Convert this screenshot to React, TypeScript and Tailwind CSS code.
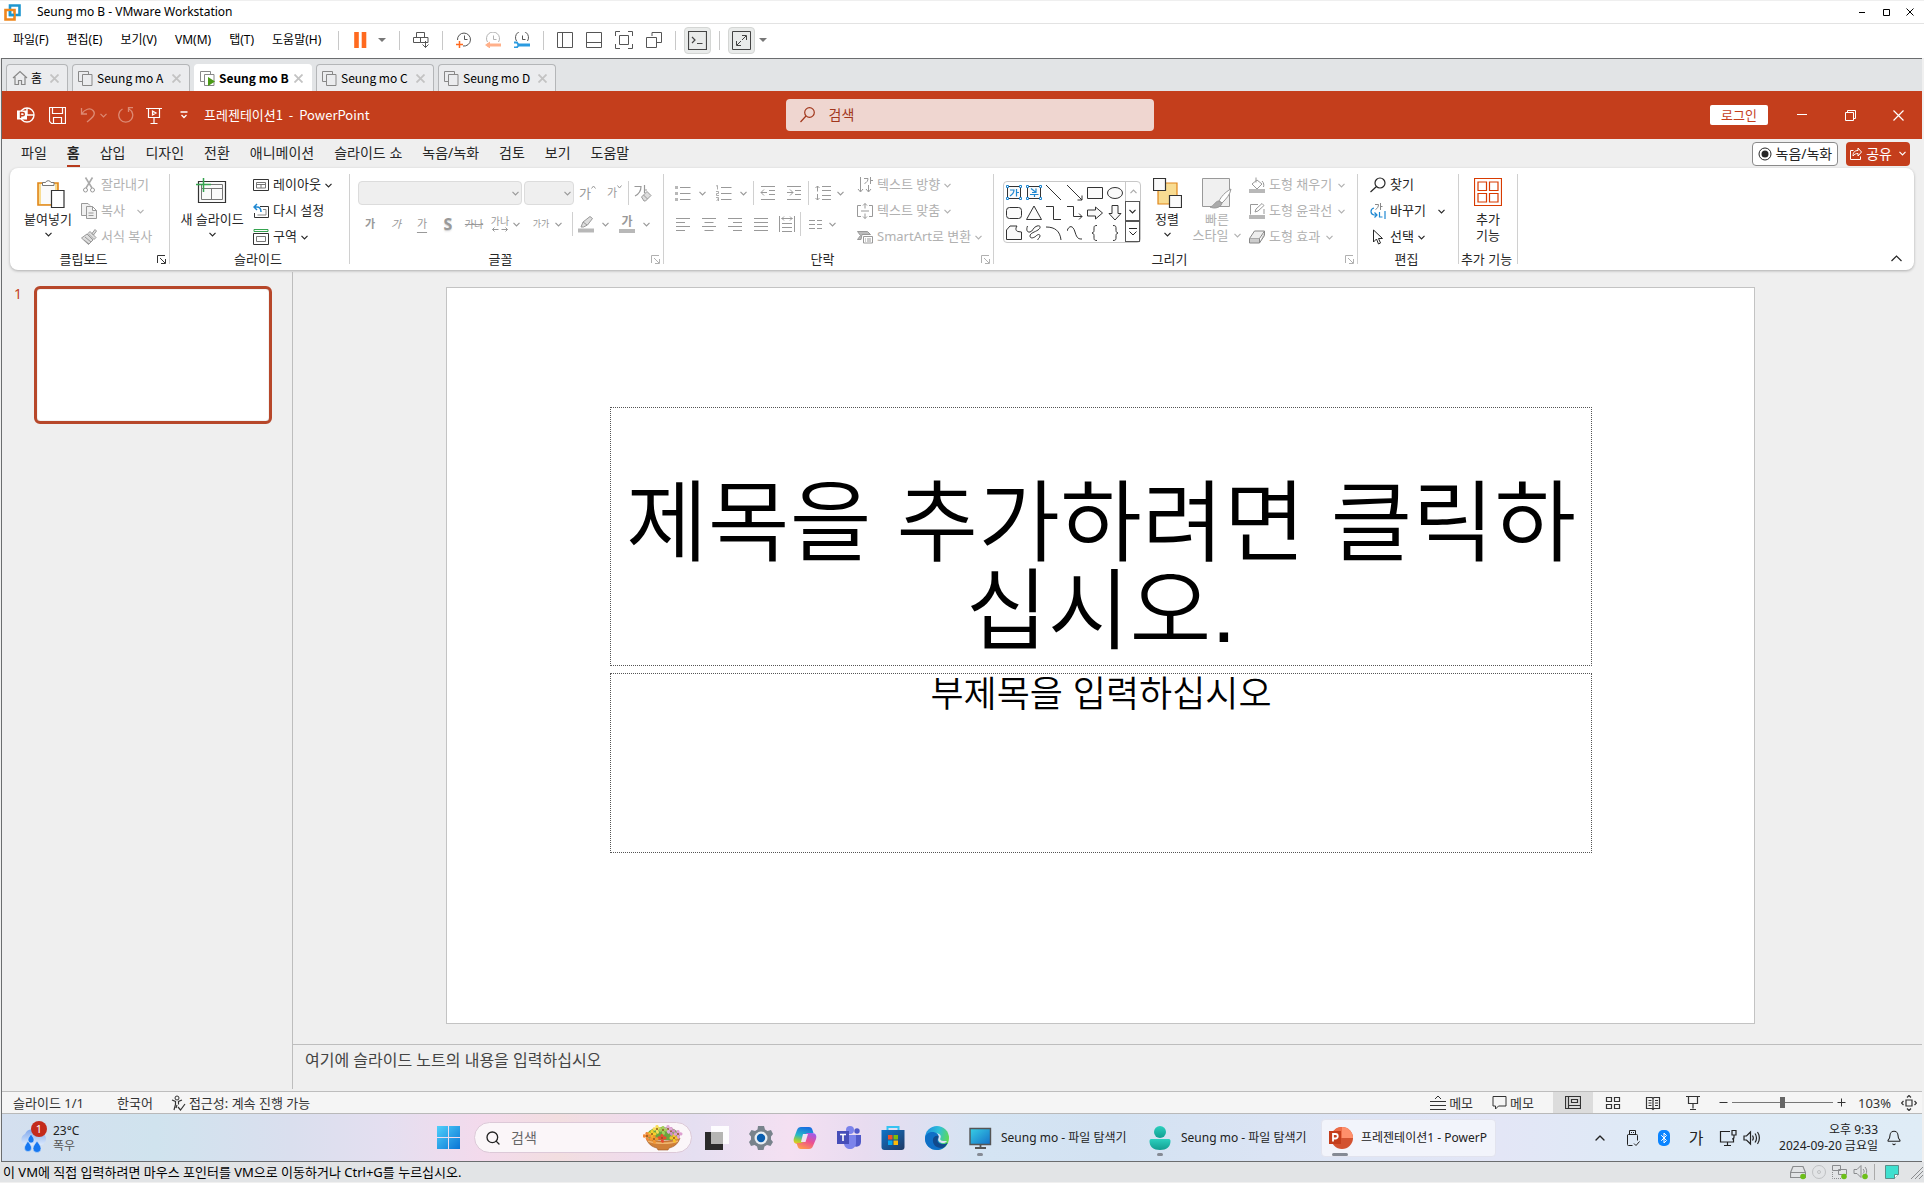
import type { ReactNode } from "react"
import { Bell, Bluetooth, ChevronUp, Search } from "lucide-react"
import clsx from "clsx"

interface SvgProps {
  w?: number
  h?: number
  className?: string
  children: ReactNode
}

// Outline icon on a pixel grid, one user unit per pixel
const Svg = ({ w = 16, h = 16, className, children }: SvgProps) => (
  <svg
    width={w}
    height={h}
    viewBox={`0 0 ${w} ${h}`}
    fill="none"
    stroke="currentColor"
    aria-hidden="true"
    className={clsx("flex-shrink-0", className)}
  >
    {children}
  </svg>
)

const Chevron = ({ className }: { className?: string }) => (
  <Svg w={7} h={5} className={className}>
    <path d="M0.5 0.8 3.5 3.8 6.5 0.8" strokeWidth="1.2" />
  </Svg>
)

const Launcher = ({ muted }: { muted?: boolean }) => (
  <button aria-label="옵션" className={muted ? "text-[#b0b0b0]" : "text-[#333]"}>
    <Svg w={9} h={9}>
      <path d="M0.5 8V0.5H8M3 3l5 5M8.500 4v4.500H4" />
    </Svg>
  </button>
)

/* ---------- VMware frame ---------- */

const TitleBar = () => (
  <header className="flex h-6 items-center border-t border-b border-t-[#efefef] border-b-[#e3e3e3] bg-white pl-1 text-xs">
    <Svg w={17} h={17}>
      <path d="M6 1.500h9.500v9.500H6z" stroke="#1f97cf" strokeWidth="2.600" />
      <path d="M1.500 6H10.500v9.500H1.500z" stroke="#f0861c" strokeWidth="2.600" />
      <path d="M6 7V11H10" stroke="#1f97cf" strokeWidth="2.400" />
    </Svg>
    <h1 className="ml-4 flex-1">Seung mo B - VMware Workstation</h1>
    <div className="flex gap-2 pr-1.5">
      <button aria-label="최소화">
        <Svg>
          <path d="M5 8.500h6" />
        </Svg>
      </button>
      <button aria-label="최대화">
        <Svg>
          <path d="M5.500 5.500h6v6h-6z" />
        </Svg>
      </button>
      <button aria-label="닫기">
        <Svg>
          <path d="M4.500 4.500 11.500 11.500M11.500 4.500 4.500 11.500" />
        </Svg>
      </button>
    </div>
  </header>
)

const menus = ["파일(F)", "편집(E)", "보기(V)", "VM(M)", "탭(T)", "도움말(H)"]

const ToolSep = () => <span className="h-[19px] w-px flex-shrink-0 bg-[#c8c8c8]" />

const ClockHands = () => <path d="M8.500 3.500V7.500H11.500" />

const MenuBar = () => (
  <div className="flex h-[34px] items-center bg-white pb-0.5 pl-[13px] text-xs text-black">
    <nav className="flex gap-[18px] pr-[17px]">
      {menus.map((menu) => (
        <button key={menu}>{menu}</button>
      ))}
    </nav>
    <div className="flex items-center gap-[13px] text-[#555]">
      <ToolSep />
      <button aria-label="일시 중지" className="flex items-center gap-2.5">
        <Svg w={16}>
          <path d="M4.500 0v16M12 0v16" stroke="#ff6a1f" strokeWidth="4.600" />
        </Svg>
        <Svg w={8} h={4}>
          <path d="M0 0h8L4 4z" fill="#777" stroke="none" />
        </Svg>
      </button>
      <ToolSep />
      <button aria-label="Ctrl+Alt+Del">
        <Svg>
          <path d="M3.500 0.500h8v5h-8zM0.500 5.500h7v5h-7zM7.500 5.500h7.500v5H7.500M12.500 9v6.500M9.500 12.500l3 3 3-3" />
        </Svg>
      </button>
      <ToolSep />
      <button aria-label="스냅숏 만들기">
        <Svg>
          <path d="M1.500 8A6.500 6.500 0 1 1 7 14" />
          <ClockHands />
          <path d="M3.500 9v7M0 12.500h7" stroke="#ff6a1f" strokeWidth="1.500" />
        </Svg>
      </button>
      <button aria-label="스냅숏 되돌리기">
        <Svg>
          <g opacity=".45">
            <path d="M2.500 10A6.500 6.500 0 1 1 13.500 10" />
            <ClockHands />
          </g>
          <path d="M2 13h14" stroke="#ffb08a" strokeWidth="3" />
          <path d="M0 13l5-3.500v7z" fill="#ffb08a" stroke="none" />
        </Svg>
      </button>
      <button aria-label="스냅숏 관리">
        <Svg>
          <path d="M2.500 9A6.500 6.500 0 1 1 13.500 9" />
          <ClockHands />
          <path d="M4 13h12" stroke="#2b9be0" strokeWidth="3" />
          <path d="M0 10.500h3l1.500 2.500-1.500 2.500H0" stroke="#2b9be0" strokeWidth="1.800" />
        </Svg>
      </button>
      <ToolSep />
      <button aria-label="라이브러리">
        <Svg>
          <path d="M0.500 0.500h15v15H0.500zM5.500 0.500v15" />
        </Svg>
      </button>
      <button aria-label="썸네일">
        <Svg>
          <path d="M0.500 0.500h15v15H0.500zM0.500 10.500h15" />
        </Svg>
      </button>
      <button aria-label="전체 화면">
        <Svg w={18} h={18}>
          <path d="M0.500 5V0.500H5M13 0.500h4.500V5M17.500 13v4.500H13M5 17.500H0.500V13M4.500 4.500h9v9h-9z" />
        </Svg>
      </button>
      <button aria-label="유니티">
        <Svg>
          <path d="M6 4V0.500h9.500V10.500H11M0.500 5.500h10v10H0.500z" />
        </Svg>
      </button>
      <ToolSep />
    </div>
    <div className="ml-2 flex items-center gap-2 text-[#444]">
      <button aria-label="콘솔" className="flex h-[27px] w-[27px] items-center justify-center rounded border border-[#d4d6d4] bg-[#e9ebea]">
        <Svg w={19} h={19}>
          <path d="M0.500 0.500h18v18H0.500zM4 6l3 3-3 3M9 12.500h5.500" strokeWidth="1.200" />
        </Svg>
      </button>
      <ToolSep />
      <button aria-label="자동 맞춤" className="flex h-[27px] w-[27px] items-center justify-center rounded border border-[#d4d6d4] bg-[#e9ebea]">
        <Svg w={19} h={19}>
          <path d="M0.500 0.500h18v18H0.500zM10 4.500h4.500V9M4.500 10v4.500H9M14 5l-4 4M5 14l4-4" />
        </Svg>
      </button>
      <Svg w={8} h={4} className="-ml-1">
        <path d="M0 0h8L4 4z" fill="#777" stroke="none" />
      </Svg>
    </div>
  </div>
)

const vmTabs = [
  { name: "홈", home: true, active: false },
  { name: "Seung mo A", home: false, active: false },
  { name: "Seung mo B", home: false, active: true },
  { name: "Seung mo C", home: false, active: false },
  { name: "Seung mo D", home: false, active: false },
]

const VmTabs = () => (
  <div className="flex h-[33px] items-end gap-1 border-t border-[#6b6d6f] bg-[#e2e4e6] pl-1 font-['Noto_Sans_CJK_KR',sans-serif] text-xs text-black">
    {vmTabs.map((tab) => (
      <div
        key={tab.name}
        className={clsx(
          "flex h-[27px] items-center rounded-t border border-b-0 pr-2 pl-[5px]",
          tab.home ? "w-[62px]" : "w-[118px]",
          tab.active ? "border-white bg-white font-bold" : "border-[#b4b6b8] bg-[#ebecee]",
        )}
      >
        <Svg className="text-[#888]">
          {tab.home ? (
            <path d="M1 8 8 1.500 15 8M3 7v7.500h3.500v-4h3v4H13V7" strokeWidth="1.200" />
          ) : (
            <path d="M4 11.500H0.500v-10h10V4M4.500 4.500h9.500v11H4.500z" />
          )}
          {tab.active && <path d="M8 7l7 4.500L8 16z" fill="#4a9a16" stroke="none" />}
        </Svg>
        <button className="ml-[3px] flex-1 text-left leading-4 whitespace-nowrap">{tab.name}</button>
        <button aria-label="탭 닫기" className="text-[#c3c3c3]">
          <Svg w={9} h={9}>
            <path d="M0.500 0.500l8 8M8.500 0.500l-8 8" strokeWidth="1.800" />
          </Svg>
        </button>
      </div>
    ))}
  </div>
)

/* ---------- PowerPoint ---------- */

const AppTitle = () => (
  <div className="flex h-12 items-center bg-[#c43e1c] text-white">
    <div className="flex flex-1 items-center pl-[15px]">
      <Svg w={18} h={18}>
        <circle cx="10" cy="9" r="7" strokeWidth="1.400" />
        <path d="M10 2v7h7" strokeWidth="1.400" />
        <path d="M0 4.500h10v9H0z" fill="#fff" stroke="none" />
        <path d="M3.500 12V6.500h2.200a1.600 1.600 0 0 1 0 3.300H3.500" stroke="#c43e1c" strokeWidth="1.400" />
      </Svg>
      <button aria-label="저장" className="ml-3.5">
        <Svg w={17} h={17}>
          <path d="M0.500 0.500h16v16H2.500l-2-2zM3.500 0.500v6h10v-6M4.500 16.500v-6h8v6" strokeWidth="1.200" />
        </Svg>
      </button>
      <button aria-label="실행 취소" className="ml-3.5 flex items-center gap-1 text-[#dd8a74]">
        <Svg>
          <path d="M1.500 1v6H7M1.500 7C5 2 10 0.500 13 3.500s1 6-6 11.500" strokeWidth="1.300" />
        </Svg>
        <Chevron />
      </button>
      <button aria-label="다시 실행" className="ml-2.5 text-[#dd8a74]">
        <Svg w={17}>
          <path d="M5.500 2A7 7 0 1 0 12 2M16 0.500h-4.500V5" strokeWidth="1.300" />
        </Svg>
      </button>
      <button aria-label="처음부터 시작" className="ml-3">
        <Svg w={16} h={17}>
          <path d="M0 1.500h16M2.500 1.500v9h11v-9M8 10.500v6M4.500 16.500h7M6.500 4v4l3.500-2z" strokeWidth="1.200" />
        </Svg>
      </button>
      <button aria-label="빠른 실행 도구 모음" className="ml-[18px]">
        <Svg w={8} h={8}>
          <path d="M0.500 1h7M1.500 4l2.500 2.500L6.500 4" strokeWidth="1.300" />
        </Svg>
      </button>
      <span className="ml-4 font-['Noto_Sans_CJK_KR',sans-serif] text-[13px] leading-4 whitespace-pre">프레젠테이션1&nbsp; - &nbsp;PowerPoint</span>
    </div>
    <label className="flex h-8 w-[368px] items-center gap-3.5 rounded bg-[#efd6d0] pl-3.5 text-[#a1371c]">
      <Svg w={15}>
        <circle cx="9.500" cy="5.500" r="4.800" strokeWidth="1.200" />
        <path d="M6 9 0.500 15" strokeWidth="1.200" />
      </Svg>
      <input aria-label="검색" placeholder="검색" className="w-full bg-transparent text-sm outline-none placeholder:text-[#a1371c]" />
    </label>
    <div className="flex flex-1 items-center justify-end">
      <button className="h-5 rounded-xs bg-white px-[11px] text-[13px] leading-5 text-[#c43e1c]">로그인</button>
      <button aria-label="최소화" className="ml-2.5 flex w-12 justify-center">
        <Svg w={10} h={10}>
          <path d="M0 4.500h10" />
        </Svg>
      </button>
      <button aria-label="이전 크기로" className="flex w-12 justify-center">
        <Svg w={11} h={11}>
          <path d="M0.500 2.500h8v8h-8zM2.500 2V0.500h8v8H9" />
        </Svg>
      </button>
      <button aria-label="닫기" className="flex w-12 justify-center">
        <Svg w={11} h={11}>
          <path d="M0.500 0.500l10 10M10.500 0.500l-10 10" strokeWidth="1.200" />
        </Svg>
      </button>
    </div>
  </div>
)

const ribbonTabs = ["파일", "홈", "삽입", "디자인", "전환", "애니메이션", "슬라이드 쇼", "녹음/녹화", "검토", "보기", "도움말"]

const RibbonTabs = () => (
  <div className="flex h-[29px] items-center pr-3 pl-[19px] text-sm text-[#262626]">
    <nav className="flex flex-1 gap-5">
      {ribbonTabs.map((tab) => (
        <button
          key={tab}
          className={clsx(
            "h-[26px] border-b-2 leading-6",
            tab === "홈" ? "border-[#b83b1d] font-bold" : "border-transparent",
          )}
        >
          {tab}
        </button>
      ))}
    </nav>
    <button className="flex h-6 items-center gap-1 rounded border border-[#8a8a8a] bg-white px-[5px]">
      <Svg w={14} h={14}>
        <circle cx="7" cy="7" r="6" />
        <circle cx="7" cy="7" r="3.500" fill="currentColor" stroke="none" />
      </Svg>
      녹음/녹화
    </button>
    <button className="ml-2 flex h-6 items-center gap-1 rounded bg-[#c43e1c] px-1 text-white">
      <Svg w={12} h={13}>
        <path d="M3.500 3.500h-3v9h10v-3M3 9c0-4 2-5.500 5-5.500V1l3.500 4L8 9V6.500C6 6.500 4.500 7 3 9z" />
      </Svg>
      공유
      <Chevron className="ml-[3px]" />
    </button>
  </div>
)

const Group = ({ label, launcher, className, children }: { label: string; launcher?: ReactNode; className?: string; children: ReactNode }) => (
  <>
    <section className={clsx("flex flex-col pt-1", className)}>
      <div className="flex h-[78px]">{children}</div>
      <div className="flex h-[18px] items-center pr-[3px]">
        <h2 className="flex-1 text-center leading-4">{label}</h2>
        {launcher}
      </div>
    </section>
    <div className="my-1.5 w-px flex-shrink-0 bg-[#d0d0d0]" />
  </>
)

interface SmallProps {
  icon: ReactNode
  label: string
  muted?: boolean
  caret?: string
}

const Small = ({ icon, label, muted, caret }: SmallProps) => (
  <button className={clsx("flex h-[26px] items-center whitespace-nowrap", muted ? "text-[#b1b1b1]" : "text-[#262626]")}>
    {icon}
    <span className="ml-1">{label}</span>
    {caret && <Chevron className={caret} />}
  </button>
)

const Big = ({ icon, children, className }: { icon: ReactNode; children: ReactNode; className: string }) => (
  <button className={clsx("flex flex-col items-center pt-1.5 leading-4", className)}>
    <span className="mb-[3px] flex h-[30px] items-start">{icon}</span>
    {children}
  </button>
)

const Clipboard = () => (
  <Group label="클립보드" launcher={<Launcher />} className="w-[159px]">
    <Big
      className="ml-2.5 w-[56px]"
      icon={
        <Svg w={34} h={30}>
          <path d="M7 5h20v22H7z" fill="#f8dc92" stroke="#e0861a" strokeWidth="1.600" />
          <path d="M10 6h14v20H10z" fill="#fafafa" stroke="none" />
          <path d="M11.500 7.500v-3h3a3 3 0 0 1 5.500 0h3v3z" fill="#fff" stroke="#777" />
          <path d="M20.500 12.500h12.500v17H20.500z" fill="#fff" stroke="#333" strokeWidth="1.200" />
        </Svg>
      }
    >
      <span>붙여넣기</span>
      <Chevron className="mt-[5px]" />
    </Big>
    <div className="ml-[5px]">
      <Small
        muted
        label="잘라내기"
        icon={
          <Svg>
            <path d="M4.500 0.500 11 11M11.500 0.500 5 11" stroke="#aaa" strokeWidth="1.600" />
            <circle cx="4.500" cy="13" r="2" stroke="#999" />
            <circle cx="11.500" cy="13" r="2" stroke="#999" />
          </Svg>
        }
      />
      <Small
        muted
        label="복사"
        caret="ml-3"
        icon={
          <Svg>
            <path d="M5.500 12.500H0.500v-12H7l2 2M5.500 3.500h6l4 4v8h-10zM11.500 3.500v4h4M7.500 10h5M7.500 12.500h5" stroke="#999" fill="#f0f0f0" />
          </Svg>
        }
      />
      <Small
        muted
        label="서식 복사"
        icon={
          <Svg>
            <path d="M0.500 9 6 5l6 6-4.500 4.500zM7 4.500l2-2 6 6-2 2zM11 4.500l3-4 1.500 1.500-3 4z" stroke="#999" fill="#ddd" />
            <path d="M3 11l5 4M4 8l6 5" stroke="#999" />
          </Svg>
        }
      />
    </div>
  </Group>
)

const Slides = () => (
  <Group label="슬라이드" className="w-[179px]">
    <Big
      className="ml-1.5 w-[72px]"
      icon={
        <Svg w={32} h={28}>
          <path d="M2.500 3.500h27v21h-27z" fill="#fafafa" stroke="#333" strokeWidth="1.200" />
          <path d="M5.500 6.500h21v15h-21zM5.500 10.500h21M15.500 10.500v11" stroke="#777" />
          <path d="M7.500 0v14M0 6.500h15" stroke="#35a34f" strokeWidth="1.500" />
        </Svg>
      }
    >
      <span className="whitespace-nowrap">새 슬라이드</span>
      <Chevron className="mt-[5px]" />
    </Big>
    <div className="ml-[5px]">
      <Small
        label="레이아웃"
        caret="ml-1"
        icon={
          <Svg>
            <path d="M0.500 2.500h15v11H0.500z" stroke="#333" />
            <path d="M3.500 5.500h9v5.500h-9zM3.500 7.500h9M8 7.500V11" stroke="#777" />
          </Svg>
        }
      />
      <Small
        label="다시 설정"
        icon={
          <Svg>
            <path d="M7 3.500h8.500v11H1.500V10" stroke="#333" />
            <path d="M10 6.500h3v5.500H4.500" stroke="#888" />
            <path d="M4 1 1 4l3 3M1 4h3c3 0 4 1.500 4 5" stroke="#1e88d2" strokeWidth="1.500" />
          </Svg>
        }
      />
      <Small
        label="구역"
        caret="ml-1"
        icon={
          <Svg>
            <path d="M1 0.500h14v2H1z" stroke="#35a34f" />
            <path d="M0.500 4.500h15v11H0.500z" stroke="#333" />
            <path d="M3.500 7.500h9v5h-9z" stroke="#777" />
          </Svg>
        }
      />
    </div>
  </Group>
)

const RowSep = ({ className }: { className?: string }) => <span className={clsx("h-6 w-px bg-[#d0d0d0]", className)} />

const Fonts = () => (
  <Group label="글꼴" launcher={<Launcher muted />} className="w-[313px]">
    <div className="flex flex-col gap-[7px] pt-[9px] text-[#999]">
      <div className="flex h-6 items-center pl-2">
        <div className="relative h-6 w-[164px]">
          <select aria-label="글꼴" className="h-6 w-full appearance-none rounded border border-[#dcdcdc] bg-[#efefef]" />
          <Chevron className="pointer-events-none absolute top-2.5 right-[3px]" />
        </div>
        <div className="relative ml-0.5 h-6 w-[50px]">
          <select aria-label="글꼴 크기" className="h-6 w-full appearance-none rounded border border-[#dcdcdc] bg-[#efefef]" />
          <Chevron className="pointer-events-none absolute top-2.5 right-[3px]" />
        </div>
        <button aria-label="글꼴 크기 크게" className="ml-[5px] flex w-[18px] items-start text-[13px] leading-4">
          가
          <Svg w={5} h={4}>
            <path d="M0.500 3.500l2-2.500 2 2.500" />
          </Svg>
        </button>
        <button aria-label="글꼴 크기 작게" className="ml-2.5 flex w-4 items-start text-[11px] leading-4">
          가
          <Svg w={5} h={4}>
            <path d="M0.500 0.500l2 2.500 2-2.500" />
          </Svg>
        </button>
        <RowSep className="ml-[5px]" />
        <button aria-label="모든 서식 지우기" className="ml-[5px]">
          <Svg w={18} h={17}>
            <path d="M0.500 1.500h6.500c0 4-2 7.500-6 9.500M10.500 0v8M10.500 5h2.500" strokeWidth="1.200" />
            <path d="M7.500 12l5.500-5.500 4 4-5.500 5.500h-1.500z" fill="#ddd" />
            <path d="M9.500 10l4 4" />
          </Svg>
        </button>
      </div>
      <div className="flex h-6 items-center pl-[7px] text-[11px]">
        <button className="w-[26px] font-bold">가</button>
        <button className="w-[26px] italic">가</button>
        <button className="w-[26px] underline underline-offset-4">가</button>
        <button className="w-[26px] text-base font-bold text-shadow-sm">S</button>
        <button className="w-[26px] text-[10px] line-through">가나</button>
        <button className="flex w-[26px] flex-col items-center text-[10px] leading-[11px]">
          가나
          <Svg h={5}>
            <path d="M2.500 0.500l-2 2 2 2M0.500 2.500h6M13.500 0.500l2 2-2 2M15.500 2.500h-6" />
          </Svg>
        </button>
        <Chevron />
        <button className="ml-2.5 w-[22px] text-[9px]">가가</button>
        <Chevron className="ml-[3px]" />
        <RowSep className="ml-2.5" />
        <button aria-label="강조색" className="ml-[5px] flex items-center gap-2">
          <Svg h={17}>
            <path d="M3 11l2-5 7-5.500 2.500 2L9.500 9l-4 2zM5 6l4 3" fill="#ddd" />
            <path d="M0 14.500h16" stroke="#b8b8b8" strokeWidth="4" />
          </Svg>
          <Chevron />
        </button>
        <button aria-label="글꼴 색" className="ml-2.5 flex items-center gap-2 font-bold">
          <span className="w-4 border-b-4 border-[#b8b8b8] pb-px text-xs leading-3">가</span>
          <Chevron />
        </button>
      </div>
    </div>
  </Group>
)

const alignments = [
  { name: "왼쪽 맞춤", path: "M1 2.500h14M1 6.500h9M1 10.500h14M1 14.500h9" },
  { name: "가운데 맞춤", path: "M1 2.500h14M3.500 6.500h9M1 10.500h14M3.500 14.500h9" },
  { name: "오른쪽 맞춤", path: "M1 2.500h14M6 6.500h9M1 10.500h14M6 14.500h9" },
  { name: "양쪽 맞춤", path: "M1 2.500h14M1 6.500h14M1 10.500h14M1 14.500h14" },
  { name: "균등 분할", path: "M0.500 0v16M15.500 0v16M2.500 2.500h11M5 0.500l-2 2 2 2M11 0.500l2 2-2 2M3 7.500h10M3 11.500h10M3 15.500h10" },
]

const Paragraph = () => (
  <Group label="단락" launcher={<Launcher muted />} className="w-[329px]">
    <div className="flex w-[193px] flex-col gap-[7px] pt-[9px] text-[#999]">
      <div className="flex h-6 items-center pl-[11px]">
        <button aria-label="글머리 기호" className="flex items-center gap-2">
          <Svg>
            <path d="M5 2.500h10.500M5 8.500h10.500M5 14.500h10.500" />
            <path d="M0 2.500h3M0 8.500h3M0 14.500h3" strokeWidth="3" stroke="#b8b8b8" />
          </Svg>
          <Chevron />
        </button>
        <button aria-label="번호 매기기" className="ml-2.5 flex items-center gap-2">
          <Svg>
            <path d="M5 2.500h10.500M5 8.500h10.500M5 14.500h10.500" />
            <path d="M0 1l1.500-.5v4M0 6.500h2.500v2H0.500v2h2.500M0 12.500h2.500v3.500H0M1 14.200h1.500" strokeWidth=".8" />
          </Svg>
          <Chevron />
        </button>
        <RowSep className="ml-1.5" />
        <button aria-label="목록 수준 줄임" className="ml-1.5">
          <Svg>
            <path d="M1 1.500h14M9 5.500h6M9 9.500h6M1 14.500h14M1 7.500h6M4 4.500l-3 3 3 3" />
          </Svg>
        </button>
        <button aria-label="목록 수준 늘림" className="ml-2.5">
          <Svg>
            <path d="M1 1.500h14M9 5.500h6M9 9.500h6M1 14.500h14M1 7.500h6M4 4.500l3 3-3 3" />
          </Svg>
        </button>
        <RowSep className="ml-1.5" />
        <button aria-label="줄 간격" className="ml-1.5 flex items-center gap-1.5">
          <Svg>
            <path d="M7 1.500h9M7 5.500h9M7 10.500h9M7 14.500h9M2.500 1v5.500M0.500 3l2-2 2 2M2.500 9v6M0.500 13l2 2 2-2" />
          </Svg>
          <Chevron />
        </button>
      </div>
      <div className="flex h-6 items-center pl-1.5">
        {alignments.map((item) => (
          <button key={item.name} aria-label={item.name} className="flex w-[26px] justify-center">
            <Svg>
              <path d={item.path} />
            </Svg>
          </button>
        ))}
        <RowSep />
        <button aria-label="열" className="ml-2 flex items-center gap-1.5">
          <Svg w={14}>
            <path d="M0 4.500h6M0 8.500h6M0 12.500h6M8 4.500h5M8 8.500h5M8 12.500h5" />
          </Svg>
          <Chevron />
        </button>
      </div>
    </div>
    <div>
      <Small
        muted
        label="텍스트 방향"
        caret="ml-1"
        icon={
          <Svg className="text-[#999]">
            <path d="M3.500 0v14.500M1 12l2.500 3L6 12M11.500 8v6.500M9 12l2.500 3 2.500-3M7 1.500h4c0 2-1 4-3.500 5M13.500 0v7M13.500 3.500H16" />
          </Svg>
        }
      />
      <Small
        muted
        label="텍스트 맞춤"
        caret="ml-1"
        icon={
          <Svg className="text-[#999]">
            <path d="M4 2.500H0.500v11H4M12 2.500h3.500v11H12M4 8h8M8 0.500v5M6 2.500l2-2 2 2M8 15.500v-5M6 13.500l2 2 2-2" />
          </Svg>
        }
      />
      <Small
        muted
        label="SmartArt로 변환"
        caret="ml-1"
        icon={
          <Svg className="text-[#999]">
            <path d="M0.500 2.500h10l3 3H5l-1 5H0.500l3-4z" fill="#bbb" />
            <path d="M6.500 7.500h9v6.500h-9z" fill="#fff" />
            <path d="M8 10h1M10 10h4M8 12h1M10 12h4" />
          </Svg>
        }
      />
    </div>
  </Group>
)

const handles = (
  <path d="M0.500 1.500h2v2h-2zM13.500 1.500h2v2h-2zM0.500 13.500h2v2h-2zM13.500 13.500h2v2h-2z" fill="#fff" stroke="#1e88d2" />
)

const shapes: { name: string; art: ReactNode }[] = [
  {
    name: "텍스트 상자",
    art: (
      <>
        <path d="M1.500 2.500h13v12h-13z" fill="#fafafa" />
        <path d="M4 6h4c0 2-1 4-4 6M10.500 5v7.500M10.500 8.500h2.500" stroke="#1e88d2" strokeWidth="1.200" />
        {handles}
      </>
    ),
  },
  {
    name: "세로 텍스트 상자",
    art: (
      <>
        <path d="M1.500 2.500h13v12h-13z" fill="#fafafa" />
        <path d="M5 4.500l4.500 3.500M10 4.500v4H6M4 10.500h8.500M8.500 10.500v2.500" stroke="#1e88d2" strokeWidth="1.200" />
        {handles}
      </>
    ),
  },
  { name: "선", art: <path d="M0 1l15 15" /> },
  { name: "선 화살표", art: <path d="M0 1l15 15M15 11.500V16h-4.500" /> },
  { name: "직사각형", art: <path d="M0.500 3.500h15v11H0.500z" fill="#fafafa" /> },
  { name: "타원", art: <ellipse cx="8" cy="9" rx="7.500" ry="5.500" fill="#fafafa" /> },
  { name: "둥근 사각형", art: <rect x="0.500" y="3.500" width="15" height="11" rx="3" fill="#fafafa" /> },
  { name: "삼각형", art: <path d="M8 2l7.500 13.500H0.500z" fill="#fafafa" /> },
  { name: "꺾인 연결선", art: <path d="M0 2.500h7.500v13H15" /> },
  { name: "꺾인 화살표", art: <path d="M0 2.500h6.500v10H15M12 9.500l3 3-3 3" /> },
  { name: "오른쪽 화살표", art: <path d="M0.500 6h8V3l7 6-7 6v-3h-8z" fill="#fafafa" /> },
  { name: "아래쪽 화살표", art: <path d="M5 1.500h6v8h3l-6 6.500-6-6.500h3z" fill="#fafafa" /> },
  { name: "자유형", art: <path d="M0.500 15.500V6l3.500-4h7c-2 3-1 5 1 5.500l3.500.5v7.500z" fill="#fafafa" /> },
  { name: "자유 곡선", art: <path d="M1.500 2C0 6 1 8.500 4 8s3-5 7-6 4 2 1 4-8 3-8 6 4 2 6 0 4-2 4 0-3 3-2 4" /> },
  { name: "호", art: <path d="M0 3c9 0 14 4 15 13" /> },
  { name: "곡선", art: <path d="M0 7c2-6 6-6 8 1s4 7 7 7" /> },
  { name: "왼쪽 중괄호", art: <path d="M10 1.500c-3 0-3 1-3 3.500s0 3.500-2 4c2 .5 2 1.500 2 4s0 3.500 3 3.500" /> },
  { name: "오른쪽 중괄호", art: <path d="M6 1.500c3 0 3 1 3 3.500s0 3.500 2 4c-2 .5-2 1.500-2 4s0 3.500-3 3.500" /> },
]

const Drawing = () => (
  <Group label="그리기" launcher={<Launcher muted />} className="w-[363px]">
    <div className="mt-[9px] ml-[9px] flex h-[62px] w-[138px] rounded border border-[#c8c8c8]">
      <div className="grid flex-1 grid-cols-6 text-[#333]">
        {shapes.map((shape) => (
          <button key={shape.name} aria-label={shape.name} className="flex h-5 items-center justify-center">
            <Svg h={17}>{shape.art}</Svg>
          </button>
        ))}
      </div>
      <div className="flex w-[15px] flex-col">
        <button aria-label="위로" className="flex flex-1 items-center justify-center border-l border-[#c8c8c8] text-[#aaa]">
          <Chevron className="rotate-180" />
        </button>
        <button aria-label="아래로" className="flex flex-1 items-center justify-center border border-[#555]">
          <Chevron />
        </button>
        <button aria-label="자세히" className="flex flex-1 items-center justify-center border border-[#555]">
          <Svg w={8} h={8}>
            <path d="M0 0.500h8M0.500 3.500 4 7l3.500-3.500" />
          </Svg>
        </button>
      </div>
    </div>
    <Big
      className="ml-1 w-11"
      icon={
        <Svg w={29} h={30}>
          <path d="M5 5h19v21H5z" fill="#f8dc92" stroke="#e0861a" strokeWidth="1.200" />
          <path d="M0.500 0.500h12v12h-12zM16.500 17.500h12v12h-12z" fill="#fafafa" stroke="#333" strokeWidth="1.200" />
        </Svg>
      }
    >
      <span>정렬</span>
      <Chevron className="mt-[5px]" />
    </Big>
    <div className="ml-0.5 flex text-[#b1b1b1]">
      <Big
        className="w-[52px]"
        icon={
          <Svg w={30} h={31}>
            <path d="M0.500 0.500h27v28h-27z" fill="#f0f0f0" stroke="#999" />
            <path d="M29 11c-6 3-10 8-12 12l3 2c4-4 8-8 9-14z" fill="#fff" stroke="#999" />
            <path d="M17 23c-4 0-5 5-9 6 4 2 11 1 12-4z" fill="#aaa" stroke="#999" />
          </Svg>
        }
      >
        <span>빠른</span>
        <span className="flex items-center whitespace-nowrap">
          스타일
          <Chevron className="ml-1.5" />
        </span>
      </Big>
    </div>
    <div className="ml-1.5">
      <Small
        muted
        label="도형 채우기"
        caret="ml-1.5"
        icon={
          <Svg>
            <path d="M3 7l5-4 5 4-5 5zM7 0.500v5M13 4c2 2 2 4 1.500 6" stroke="#999" />
            <path d="M0 14h16" stroke="#b8b8b8" strokeWidth="4" />
          </Svg>
        }
      />
      <Small
        muted
        label="도형 윤곽선"
        caret="ml-1.5"
        icon={
          <Svg>
            <path d="M9 1.500H1.500v10M6 9l1-3 6-5.500 2 2L9 8zM15 6v5" stroke="#999" />
            <path d="M0 14h16" stroke="#b8b8b8" strokeWidth="4" />
          </Svg>
        }
      />
      <Small
        muted
        label="도형 효과"
        caret="ml-1.5"
        icon={
          <Svg>
            <path d="M0.500 9.500l5-7.500h10l-5 7.500z" stroke="#888" fill="#eee" />
            <path d="M0.500 9.500v4.500h10V9.500M10.500 14l5-7.500V2" stroke="#888" fill="#ccc" />
          </Svg>
        }
      />
    </div>
  </Group>
)

const Editing = () => (
  <Group label="편집" className="w-[100px]">
    <div className="ml-3">
      <Small
        label="찾기"
        icon={
          <Svg>
            <circle cx="10" cy="6" r="5" strokeWidth="1.200" />
            <path d="M6.500 9.500 0.500 15" strokeWidth="1.200" />
          </Svg>
        }
      />
      <Small
        label="바꾸기"
        caret="ml-3"
        icon={
          <Svg>
            <path d="M5 1.500h3.500c0 2-1 4-3 5M10.500 0v7M10.500 3.500h2" stroke="#888" />
            <path d="M4 5C0 6 0 11 4 12h3M4.500 9.500 7 12l-2.500 2.500M9.500 9v5h3M15 8v8" stroke="#1e88d2" strokeWidth="1.200" />
          </Svg>
        }
      />
      <Small
        label="선택"
        caret="ml-1"
        icon={
          <Svg>
            <path d="M3.500 1v12l3-3 2 5 2-1-2-4.500h4z" />
          </Svg>
        }
      />
    </div>
  </Group>
)

const AddIns = () => (
  <Group label="추가 기능" className="w-[58px] whitespace-nowrap">
    <Big
      className="w-full"
      icon={
        <Svg w={28} h={28}>
          <path d="M0.500 0.500h27v27h-27zM4 4h8.500v8.500H4zM15.500 4H24v8.500h-8.500zM4 15.500h8.500V24H4zM15.500 15.500H24V24h-8.500z" stroke="#d83b01" strokeWidth="1.200" />
        </Svg>
      }
    >
      <span>추가</span>
      <span>기능</span>
    </Big>
  </Group>
)

const Ribbon = () => (
  <div className="mx-2 flex h-[102px] rounded-lg bg-white text-[13px] text-[#262626] shadow-[0_1px_3px_rgba(0,0,0,0.28)]">
    <Clipboard />
    <Slides />
    <Fonts />
    <Paragraph />
    <Drawing />
    <Editing />
    <AddIns />
    <div className="flex flex-1 items-end justify-end pr-3 pb-2">
      <button aria-label="리본 축소">
        <Svg w={11} h={7}>
          <path d="M0.500 6l5-5 5 5" strokeWidth="1.200" />
        </Svg>
      </button>
    </div>
  </div>
)

const Editor = () => (
  <div className="flex flex-1 pt-0.5">
    <aside className="mb-0.5 flex w-[291px] items-start border-r border-[#bdbdbd] pt-3.5 pl-3">
      <span className="w-5 text-sm leading-4 text-[#c43e1c]">1</span>
      <button aria-label="슬라이드 1" className="h-[138px] w-[238px] rounded-md border-[3px] border-[#b7472a] bg-white shadow-[inset_0_0_1px_#888]" />
    </aside>
    <main className="flex flex-1 flex-col">
      <div className="flex flex-1 pt-[15px] pr-[167px] pb-5 pl-[153px]">
        <article className="flex-1 border border-[#c3c3c3] bg-white pt-[119px] pr-[162px] pl-[163px] text-center font-['Liberation_Sans','Noto_Sans_CJK_KR',sans-serif] text-black">
          <div className="flex h-[259px] items-end justify-center border border-dotted border-[#555] px-2.5 pb-2.5">
            <h2 className="text-[89px] leading-[88px] font-[350]">제목을 추가하려면 클릭하십시오.</h2>
          </div>
          <div className="mt-[7px] h-[180px] border border-dotted border-[#555]">
            <p className="text-4xl leading-[42px] font-[350]">부제목을 입력하십시오</p>
          </div>
        </article>
      </div>
      <p className="h-[47px] border-t border-[#bdbdbd] pt-[3px] pl-3 text-base leading-6 text-[#444]">
        여기에 슬라이드 노트의 내용을 입력하십시오
      </p>
    </main>
  </div>
)

const views = [
  { name: "기본", path: "M0.500 1.500h15v12H0.500zM3.500 1.500v12M3.500 10.500h12M6.500 4.500h6v3h-6z" },
  { name: "여러 슬라이드", path: "M1.500 2.500h5v4h-5zM9.500 2.500h5v4h-5zM1.500 9.500h5v4h-5zM9.500 9.500h5v4h-5z" },
  { name: "읽기용 보기", path: "M1.500 2.500h5.500l1 1 1-1h5.500v11H9l-1 1-1-1H1.500zM8 3.500v11M3.500 5.500h3M3.500 8h3M3.500 10.500h3M10 5.500h3M10 8h3M10 10.500h3" },
  { name: "슬라이드 쇼", path: "M1 1.500h14M3.500 1.500v7h9v-7M8 8.500v5M5 14.500h6" },
]

const StatusBar = () => (
  <footer className="flex h-[23px] items-center border-t border-b border-t-[#bdbdbd] border-b-[#b9b9b9] bg-[#f5f5f5] pl-[11px] text-[13px] leading-[18px] text-[#333]">
    <span className="w-[104px]">슬라이드 1/1</span>
    <button>한국어</button>
    <button className="ml-[18px] flex items-center gap-[3px]">
      <Svg w={15}>
        <circle cx="6" cy="3" r="2" />
        <path d="M1 5l3.500 1.500v3L3 15M11 5 7.500 6.500v3M6 10l-1 3M7 12l2.500 3L14 9" strokeWidth="1.200" />
      </Svg>
      접근성: 계속 진행 가능
    </button>
    <div className="flex flex-1 items-center justify-end">
      <button className="flex items-center gap-[3px]">
        <Svg>
          <path d="M0 6.500h16M0 10.500h16M0 14.500h16M5 4l3-3 3 3" />
        </Svg>
        메모
      </button>
      <button className="mr-[19px] ml-[19px] flex items-center gap-[3px]">
        <Svg w={15}>
          <path d="M1 1.500h13v9.500H6.500L3.500 14v-3H1z" />
        </Svg>
        메모
      </button>
      {views.map((view) => (
        <button
          key={view.name}
          aria-label={view.name}
          className={clsx("flex h-[21px] w-10 items-center justify-center", view.name === "기본" && "bg-[#dcdcdc]")}
        >
          <Svg>
            <path d={view.path} strokeWidth="1.200" />
          </Svg>
        </button>
      ))}
      <button aria-label="축소" className="ml-1.5">
        <Svg w={9} h={9}>
          <path d="M0.500 4.500h8" />
        </Svg>
      </button>
      <input
        type="range"
        aria-label="확대/축소"
        defaultValue={50}
        className="mx-1 h-px w-[101px] appearance-none bg-[#777] [&::-webkit-slider-thumb]:h-[11px] [&::-webkit-slider-thumb]:w-[5px] [&::-webkit-slider-thumb]:appearance-none [&::-webkit-slider-thumb]:bg-[#666]"
      />
      <button aria-label="확대">
        <Svg w={9} h={9}>
          <path d="M0.500 4.500h8M4.500 0.500v8" />
        </Svg>
      </button>
      <button className="ml-3 w-8 text-right">103%</button>
      <button aria-label="창에 맞춤" className="mr-[5px] ml-[11px]">
        <Svg>
          <path d="M5 5h6v6H5zM6 2.500l2-2 2 2M6 13.500l2 2 2-2M2.500 6l-2 2 2 2M13.500 6l2 2-2 2" strokeWidth="1.200" />
        </Svg>
      </button>
    </div>
  </footer>
)

/* ---------- Windows taskbar ---------- */

const Weather = () => (
  <button className="flex items-center gap-[5px] text-left text-xs leading-[15px] text-[#222]">
    <Svg w={29} h={34}>
      <defs>
        <linearGradient id="cloud" x1="0" y1="0" x2="0" y2="1">
          <stop offset="0" stopColor="#7fa8ee" />
          <stop offset="1" stopColor="#dce9fb" />
        </linearGradient>
      </defs>
      <path d="M6 24a6 6 0 0 1 0-11 8 8 0 0 1 14-1 6 6 0 0 1 2 12z" fill="url(#cloud)" stroke="none" />
      <path d="M12 13c2 3 3 4 3 6a3 3 0 0 1-6 0c0-2 1-3 3-6zM9 20c2 3 3.500 5 3.500 7a3.500 3.500 0 0 1-7 0c0-2 1.500-4 3.500-7zM18 20c2 3 4 5 4 7.500a4 4 0 0 1-8 0c0-2.500 2-4.500 4-7.500z" fill="#1677f0" stroke="#cfe2fb" strokeWidth=".6" />
      <circle cx="20" cy="8" r="8" fill="#c42b1c" stroke="none" />
      <text x="20" y="12" textAnchor="middle" fill="#fff" stroke="none" fontSize="11">
        1
      </text>
    </Svg>
    <span>
      23°C
      <br />
      <span className="text-[#555]">폭우</span>
    </span>
  </button>
)

const FlowerBowl = () => (
  <Svg w={40} h={26}>
    <path d="M3 11c2-6 8-9 17-9s15 3 17 9l-5 4H8z" fill="#6aa53e" stroke="none" />
    <path d="M3 13c8 4 26 4 34 0-2 6-6 9-11 10l-1 2H15l-1-2C9 22 5 19 3 13z" fill="#d08038" stroke="#9a5520" strokeWidth=".6" />
    <path d="M5 16c8 3 22 3 30 0" stroke="#f0b36c" strokeWidth="1.400" />
    {[
      [9, 9, "#f7cf2e"],
      [14, 4, "#f9de58"],
      [28, 6, "#d08cc3"],
      [25, 4, "#e0a9d6"],
      [19, 13, "#ea4a30"],
      [31, 13, "#f7c12a"],
      [11, 14, "#f3952f"],
      [35, 9, "#dd9fd0"],
      [4, 11, "#f08a3a"],
      [20, 5, "#a5cf5c"],
    ].map(([x, y, color]) => (
      <g key={`${x}-${y}`} stroke="none">
        <path
          d="M0-4C2-4 2-1.500 1-1c1-1.500 4-.500 3.500 1.200C4 2 2 1.500 1 1c1 1 1.500 3.500 0 3.800C-1 5-1.500 2-.800 1-2 2-4.500 2-4.500 0S-2-2-1-1C-2-2-2-4 0-4z"
          transform={`translate(${x} ${y})`}
          fill={String(color)}
        />
        <circle cx={x} cy={y} r="1" fill="#8a5a1c" />
      </g>
    ))}
  </Svg>
)

const pinned: { name: string; art: ReactNode }[] = [
  {
    name: "작업 보기",
    art: (
      <g stroke="none">
        <path d="M0 6h18v18H0z" fill="#2b2b2b" />
        <path d="M6 0h18v18H6z" fill="#fff" opacity=".9" />
        <path d="M6 6h12v12H6z" fill="#b5b5b3" />
      </g>
    ),
  },
  {
    name: "설정",
    art: (
      <g stroke="none">
        <path
          d="M9 0h6l1 3.500 2.500 1.500L22 4l2 4-2 2.500v3L24 16l-2.500 4-3.500-1-2.500 1.500-1 3.500H9l-1-3.500L5.500 19 2 20l-2-4 2-2.500v-3L0 8l2.500-4L6 5l2.500-1.500z"
          fill="#78838c"
        />
        <circle cx="12" cy="12" r="6.500" fill="#e8eef2" />
        <circle cx="12" cy="12" r="4.200" fill="#0a5fb0" />
      </g>
    ),
  },
  {
    name: "Copilot",
    art: (
      <g stroke="none">
        <path d="M8 1h8c2 0 3 1 3.500 3l1 3h-4c-2 0-3 1-3.500 3l-2.500 8H5c-4 0-5-3-4-6L4 4c.7-2 2-3 4-3z" fill="url(#copA)" />
        <path d="M16 23H8c-2 0-3-1-3.500-3l-1-3h4c2 0 3-1 3.500-3L13.500 7H19c4 0 5 3 4 6l-3 7c-.7 2-2 3-4 3z" fill="url(#copB)" />
        <path d="M10 8h5l-2.500 8H8z" fill="#efe4f2" />
      </g>
    ),
  },
  {
    name: "Teams",
    art: (
      <g stroke="none">
        <circle cx="20" cy="5" r="2.700" fill="#5059c9" />
        <circle cx="13" cy="4" r="4" fill="#7b83eb" />
        <path d="M16 9h8v7c0 6-8 6-8 1z" fill="#5059c9" />
        <path d="M7 9h12v8c0 8-12 8-12 0z" fill="#7b83eb" />
        <path d="M0 5h12v13H0z" fill="#464eb8" />
        <path d="M3 8.500h6M6 8.500V15" stroke="#fff" strokeWidth="1.600" />
      </g>
    ),
  },
  {
    name: "Microsoft Store",
    art: (
      <g stroke="none">
        <path d="M6.500 5V1h11v4" fill="none" stroke="#35c3f2" strokeWidth="2" />
        <path d="M0.500 4h23v17c0 2-1 3-3 3h-17c-2 0-3-1-3-3z" fill="url(#store)" />
        <path d="M7 9h4.500v4.500H7z" fill="#f35325" />
        <path d="M12.500 9H17v4.500h-4.500z" fill="#81bc06" />
        <path d="M7 14.500h4.500V19H7z" fill="#05a6f0" />
        <path d="M12.500 14.500H17V19h-4.500z" fill="#ffba08" />
      </g>
    ),
  },
  {
    name: "Edge",
    art: (
      <g stroke="none">
        <circle cx="12" cy="12" r="12" fill="url(#edge)" />
        <path d="M0 13C0 7 6 5 10 6.500c4 1 4.500 4.500 3.500 6-1.500 3 1.500 5.500 5 5.500 2 0 3-.5 4-1-2 4.500-6 7-10.500 7C5 24 0 19 0 13z" fill="#0f6fc6" />
        <path d="M8 13c-1 5 3 9 8 9 3 0 5-2 6.500-5-5 2.500-11 1-10-4 .3-1 1.500-1.500 1.500-3-3-1-5.500.5-6 3z" fill="#114a8b" />
        <path d="M13.500 12.500c1-2.500-.5-4.500-2-5.500 4 1 5 3 4 5-1 1.500 0 3 3 3h3.500c-1 1.500-2.500 2-4 2-3.500 0-5.500-2.500-4.500-4.500z" fill="#dfe2f2" />
      </g>
    ),
  },
]

const MonitorIcon = () => (
  <Svg w={24} h={24}>
    <path d="M1 2.500h20.500v16H1z" fill="url(#screen)" stroke="#555" strokeWidth="1.400" />
    <path d="M11.500 19v3M6 22h11" stroke="#555" strokeWidth="1.800" />
  </Svg>
)

const PersonIcon = () => (
  <Svg w={24} h={24}>
    <g fill="url(#person)" stroke="none">
      <circle cx="11" cy="6" r="6" />
      <path d="M2 13h18c1 0 1.500 1 1.500 2 0 6-4 9-10.500 9S0.500 21 0.500 15c0-1 .5-2 1.500-2z" />
    </g>
  </Svg>
)

const PowerPointIcon = () => (
  <Svg w={24} h={24}>
    <g stroke="none">
      <circle cx="13" cy="12" r="11" fill="#d35230" />
      <path d="M13 1a11 11 0 0 1 11 11H13z" fill="#ff8f6b" />
      <path d="M13 1v11H2A11 11 0 0 1 13 1z" fill="#ed6c47" />
      <path d="M0 5h12v13H0z" fill="#c43e1c" />
      <path d="M4 15.500V8h2.500a2.200 2.200 0 0 1 0 4.500H4" fill="none" stroke="#fff" strokeWidth="1.800" />
    </g>
  </Svg>
)

const windows = [
  { id: 1, title: "Seung mo - 파일 탐색기", icon: <MonitorIcon />, active: false },
  { id: 2, title: "Seung mo - 파일 탐색기", icon: <PersonIcon />, active: false },
  { id: 3, title: "프레젠테이션1 - PowerP", icon: <PowerPointIcon />, active: true },
]

const Gradients = () => (
  <svg width="0" height="0" className="absolute" aria-hidden="true">
    <defs>
      <linearGradient id="win" x1="0" y1="0" x2="1" y2="1">
        <stop offset="0" stopColor="#4fd0fb" />
        <stop offset="1" stopColor="#0a74d4" />
      </linearGradient>
      <linearGradient id="copA" x1="0.500" y1="0" x2="0.200" y2="1">
        <stop offset="0" stopColor="#1a6fe0" />
        <stop offset=".5" stopColor="#25b8c9" />
        <stop offset=".8" stopColor="#9fcf3a" />
        <stop offset="1" stopColor="#f2c61c" />
      </linearGradient>
      <linearGradient id="copB" x1="0.800" y1="0" x2="0.300" y2="1">
        <stop offset="0" stopColor="#9b5cf0" />
        <stop offset=".5" stopColor="#ec4f8f" />
        <stop offset="1" stopColor="#ff9a4a" />
      </linearGradient>
      <linearGradient id="store" x1="0" y1="0" x2="1" y2="1">
        <stop offset="0" stopColor="#0f74c9" />
        <stop offset="1" stopColor="#203864" />
      </linearGradient>
      <linearGradient id="edge" x1="0" y1="0.300" x2="1" y2="0.600">
        <stop offset="0" stopColor="#1c8fe0" />
        <stop offset=".5" stopColor="#2fc0d8" />
        <stop offset="1" stopColor="#62dc4a" />
      </linearGradient>
      <linearGradient id="screen" x1="0" y1="0" x2="1" y2="1">
        <stop offset="0" stopColor="#37d0e6" />
        <stop offset="1" stopColor="#1570c8" />
      </linearGradient>
      <linearGradient id="person" x1="0" y1="0" x2="0" y2="1">
        <stop offset="0" stopColor="#2bd0be" />
        <stop offset="1" stopColor="#129d90" />
      </linearGradient>
    </defs>
  </svg>
)

const Taskbar = () => (
  <div className="flex h-12 items-center border-b border-[#6b6d6f] bg-[linear-gradient(90deg,#d4dfef_0%,#d0e3ee_8%,#dadfee_15%,#e4dff0_20%,#f3daec_25%,#f2dee0_29%,#efdbec_33%,#e5dff1_36%,#f4e0f2_41%,#e8dcf0_45%,#d4e4f3_51%,#d3e2f2_58%,#dbe4f4_66%,#e3e6f6_78%,#deeaf6_86%,#dfecf6_100%)] pl-[17px] text-xs text-[#222]">
    <Gradients />
    <div className="w-[418px]">
      <Weather />
    </div>
    <button aria-label="시작">
      <Svg w={23} h={23}>
        <path d="M0 0h11v11H0zM12 0h11v11H12zM0 12h11v11H0zM12 12h11v11H12z" fill="url(#win)" stroke="none" />
      </Svg>
    </button>
    <label className="ml-3.5 flex h-[31px] w-[218px] items-center rounded-full border border-[#dcc9d8] bg-[#fbf6f9] pr-2 pl-2.5">
      <Search size={16} className="flex-shrink-0 text-[#222]" />
      <input aria-label="검색" placeholder="검색" className="ml-2.5 min-w-0 flex-1 bg-transparent text-sm outline-none placeholder:text-[#666]" />
      <FlowerBowl />
    </label>
    <div className="ml-[13px] flex gap-5">
      {pinned.map((app) => (
        <button key={app.name} aria-label={app.name}>
          <Svg w={24} h={24}>
            {app.art}
          </Svg>
        </button>
      ))}
    </div>
    <div className="ml-3 flex gap-[5px]">
      {windows.map((win) => (
        <button
          key={win.id}
          className={clsx(
            "relative flex h-[38px] w-[175px] items-center gap-2 rounded border px-[7px]",
            win.active ? "border-[#e2e3ee] bg-[#f2f4fb]" : "border-transparent",
          )}
        >
          {win.icon}
          <span className="overflow-hidden whitespace-nowrap">{win.title}</span>
          <span
            className={clsx(
              "absolute bottom-0 h-[3px] rounded-full bg-[#858a94]",
              win.active ? "left-2.5 w-4" : "left-[15px] w-1.5",
            )}
          />
        </button>
      ))}
    </div>
    <div className="flex flex-1 items-center justify-end">
      <button aria-label="숨겨진 아이콘 표시">
        <ChevronUp size={16} />
      </button>
      <Svg w={14} h={18} className="ml-[18px]">
        <path d="M3.500 5.500V1.500h6v4M1.500 6.500c0-1 .5-1 1-1h8c.5 0 1 0 1 1v5M1.500 6v9.500c0 1 .5 1 1 1h4M5.500 3v1M7.500 3v1M8 14.500l2 2 3.500-4" />
      </Svg>
      <span className="ml-[18px] flex h-4 w-3 items-center justify-center rounded-[5px] bg-[#0a84ff] text-white">
        <Bluetooth size={12} />
      </span>
      <button className="ml-[18px] w-4 text-base leading-5">가</button>
      <Svg w={18} className="ml-[15px]">
        <path d="M11 1.500H1.500v10.500H14.500V9M5 15.500h7M8.500 12v3.500M13 0.500h4v4.500h-4zM15 5v2c0 1-.5 2-2 2" strokeWidth="1.200" />
      </Svg>
      <Svg w={18} className="ml-1.5">
        <path d="M1 6h2.500L7.500 2v12l-4-4H1zM9.500 5.500c1 1.500 1 3.500 0 5M12 3.500c2 2.500 2 6.500 0 9M14.500 2c2.500 3.500 2.500 8.500 0 12" strokeWidth="1.200" />
      </Svg>
      <div className="ml-[18px] text-right leading-4">
        오후 9:33
        <br />
        2024-09-20 금요일
      </div>
      <button aria-label="알림" className="mr-5 ml-2">
        <Bell size={16} strokeWidth={1.600} />
      </button>
    </div>
  </div>
)

const VmStatus = () => (
  <div className="flex h-[21px] items-center border-b border-[#f0f0f0] bg-[#e2e4e6] pl-[3px] text-[13px] leading-5 text-black">
    <p className="flex-1">이 VM에 직접 입력하려면 마우스 포인터를 VM으로 이동하거나 Ctrl+G를 누르십시오.</p>
    <div className="flex items-center gap-[5px] text-[#8a8c8e]">
      <Svg>
        <path d="M3 2.500h10l2.500 6v5H0.500v-5zM0.500 8.500h15" strokeWidth="1.200" />
        <circle cx="13" cy="12.500" r="2.800" fill="#6cbf1a" stroke="none" />
      </Svg>
      <Svg className="text-[#bfc1c3]">
        <circle cx="8" cy="8" r="6.500" />
        <circle cx="8" cy="8" r="1.500" />
      </Svg>
      <Svg>
        <path d="M0.500 1.500h8v5h-8zM6.500 5.500h8v5h-8z" />
        <path d="M0.500 8v6.500H10" strokeDasharray="1 1" />
        <circle cx="12" cy="12.500" r="2.800" fill="#6cbf1a" stroke="none" />
      </Svg>
      <Svg>
        <path d="M1 5.500h3l4-4v12l-4-4H1zM10 5c1.500 1.500 1.500 3 0 4.500M12 3c2 2.500 2 5 1 7" />
        <circle cx="12" cy="12.500" r="2.800" fill="#6cbf1a" stroke="none" />
      </Svg>
      <span className="h-4 w-px bg-[#aaa]" />
      <Svg className="ml-1">
        <path d="M1.500 1.500h13v9l-4 4h-9z" fill="#3fe0cf" stroke="#5b8f8a" />
        <path d="M14.500 10.500h-4v4" fill="#fff" stroke="#5b8f8a" />
      </Svg>
      <Svg w={14} className="ml-[5px]">
        <path d="M1 15 13 3M5 15l8-8M9 15l4-4" />
      </Svg>
    </div>
  </div>
)

const App = () => (
  <div className="flex min-h-screen flex-col bg-[#f0f0f0] font-['Noto_Sans','Noto_Sans_CJK_KR',sans-serif] text-black">
    <TitleBar />
    <MenuBar />
    <div className="mr-0.5 ml-px flex flex-1 flex-col border-l border-[#6b6d6f]">
      <VmTabs />
      <div className="flex flex-1 flex-col bg-[#efefef]">
        <AppTitle />
        <RibbonTabs />
        <Ribbon />
        <Editor />
        <StatusBar />
        <Taskbar />
      </div>
    </div>
    <VmStatus />
  </div>
)

export default App
